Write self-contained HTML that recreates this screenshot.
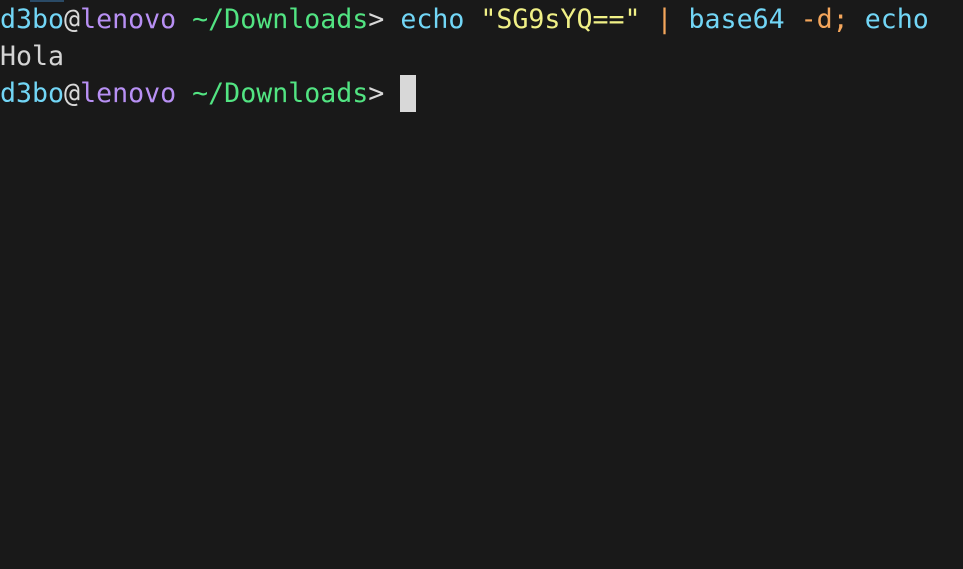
<!DOCTYPE html>
<html><head><meta charset="utf-8"><style>
html,body{margin:0;padding:0;background:#191919;width:963px;height:569px;overflow:hidden}
pre{margin:0;position:absolute;left:0;top:1px;font-family:"DejaVu Sans Mono","Liberation Mono",monospace;font-size:26.6px;line-height:37px;color:#d4d4d4}
.c{color:#72d6f6}.p{color:#b890f4}.g{color:#52e482}.y{color:#f0f086}.o{color:#f4a65c}.w{color:#d8d8d8}
.cur{display:inline-block;width:16px;height:37px;background:#d8d8d8;vertical-align:top}
.bar{position:absolute;left:30px;top:0;width:34px;height:2px;background:#2a4a66}
</style></head><body>
<div class="bar"></div>
<pre><span class="c">d3bo</span><span class="w">@</span><span class="p">lenovo</span> <span class="g">~/Downloads</span><span class="w">&gt;</span> <span class="c">echo</span> <span class="y">"SG9sYQ=="</span> <span class="o">|</span> <span class="c">base64</span> <span class="o">-d;</span> <span class="c">echo</span>
Hola
<span class="c">d3bo</span><span class="w">@</span><span class="p">lenovo</span> <span class="g">~/Downloads</span><span class="w">&gt;</span> <span class="cur"></span></pre>
</body></html>
